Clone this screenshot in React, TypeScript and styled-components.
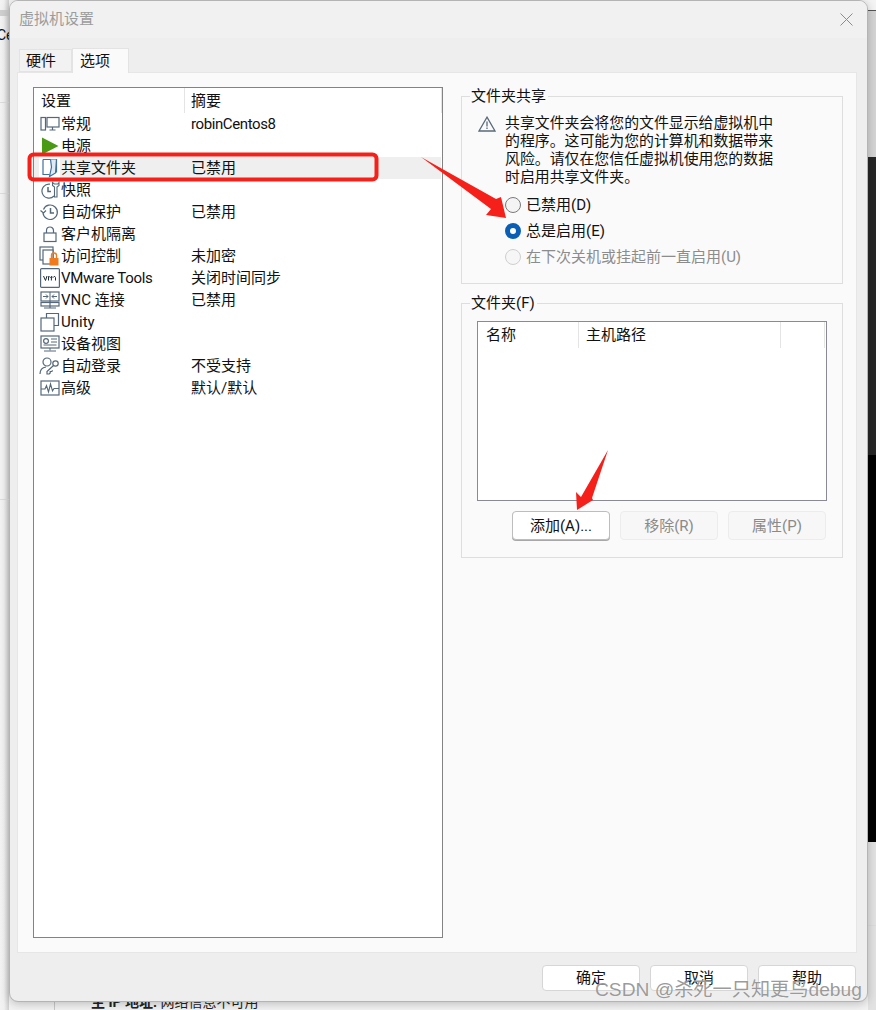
import React from "react";
import styled, { createGlobalStyle } from "styled-components";

const Global = createGlobalStyle`
  html, body { margin: 0; padding: 0; background: #f2f2f2; }
  * { box-sizing: border-box; }
  body { font-family: Roboto, "Noto Sans CJK SC", sans-serif; font-size: 15px; line-height: 20px; color: #111; }
`;

const Desktop = styled.div`
  position: relative;
  width: 876px;
  height: 1010px;
  overflow: hidden;
  background: #f3f3f3;
`;

const LeftStrip = styled.div`
  position: absolute;
  left: 0;
  top: 0;
  width: 9px;
  height: 1010px;
  display: flex;
  flex-direction: column;
  background: linear-gradient(90deg, #f3f3f3 0, #f0f0f0 4px, #cfcfcf 9px);
`;

const StripBand = styled.div<{ $h: number; $line?: boolean; $bg?: string }>`
  height: ${(p) => p.$h}px;
  flex: none;
  background: ${(p) => p.$bg ?? "transparent"};
  border-bottom: ${(p) => (p.$line ? "1px solid #dcdcdc" : "none")};
  overflow: hidden;
  white-space: nowrap;
  font-size: 14px;
  line-height: 18px;
`;

const StripText = styled.div<{ $top: number; $left: number }>`
  margin-top: ${(p) => p.$top}px;
  margin-left: ${(p) => p.$left}px;
`;

const RightStrip = styled.div`
  position: absolute;
  left: 868px;
  top: 0;
  width: 8px;
  height: 1010px;
  display: flex;
  flex-direction: column;
`;

const BottomPeek = styled.div`
  position: absolute;
  left: 54px;
  top: 993px;
  height: 17px;
  padding-left: 36px;
  border-left: 1px solid #c8c8c8;
  font-size: 14px;
  line-height: 18px;
  color: #222;
  white-space: nowrap;
`;

const Dialog = styled.div`
  position: absolute;
  left: 9px;
  top: 0;
  width: 859px;
  height: 1002px;
  display: flex;
  flex-direction: column;
  background: #eeeeee;
  border: 1px solid #b4b4b4;
  border-radius: 9px;
  box-shadow: 0 2px 10px rgba(0, 0, 0, 0.22);
`;

const TitleBar = styled.div`
  flex: none;
  height: 37px;
  display: flex;
  align-items: center;
  justify-content: space-between;
  padding: 0 14px 0 9px;
  color: #9c9c9c;
  font-size: 15px;
  border-radius: 8px 8px 0 0;
  background: #f1f1f1;
`;

const TitleText = styled.span`
  padding-bottom: 1px;
`;

const TabRow = styled.div`
  flex: none;
  height: 34px;
  display: flex;
  align-items: flex-end;
  padding-left: 9px;
`;

const Tab = styled.div<{ $active?: boolean }>`
  width: ${(p) => (p.$active ? 57 : 53)}px;
  height: ${(p) => (p.$active ? 25 : 23)}px;
  margin-bottom: ${(p) => (p.$active ? -1 : 0)}px;
  position: relative;
  z-index: ${(p) => (p.$active ? 1 : 0)};
  display: flex;
  align-items: center;
  justify-content: flex-start;
  padding: 0 0 ${(p) => (p.$active ? 1 : 0)}px ${(p) => (p.$active ? 7 : 6)}px;
  background: ${(p) => (p.$active ? "#fafafa" : "#f2f2f2")};
  border: 1px solid #e3e3e3;
  border-bottom: ${(p) => (p.$active ? "none" : "1px solid #e3e3e3")};
  font-size: 15px;
  color: #111;
`;

const Pane = styled.div`
  width: 840px;
  margin-left: 7px;
  height: 881px;
  flex: none;
  background: #fafafa;
  border: 1px solid #e6e6e6;
  padding: 14px 12px 14px 15px;
  display: flex;
  gap: 18px;
`;

const ListBox = styled.div`
  flex: none;
  width: 410px;
  height: 851px;
  background: #fff;
  border: 1px solid #838383;
`;

const HeaderRow = styled.div<{ $cols: string; $h: number }>`
  height: ${(p) => p.$h}px;
  display: grid;
  grid-template-columns: ${(p) => p.$cols};
  align-items: stretch;
`;

const HeaderCell = styled.div<{ $pad: number }>`
  display: flex;
  align-items: center;
  padding-left: ${(p) => p.$pad}px;
  border-right: 1px solid #e4e4e4;
  color: #111;
`;

const Row = styled.div<{ $selected?: boolean }>`
  height: 22px;
  display: grid;
  grid-template-columns: 151px 1fr;
  align-items: center;
  margin-right: 1px;
  background: ${(p) => (p.$selected ? "#efefef" : "transparent")};
  white-space: nowrap;
`;

const NameCell = styled.div`
  display: flex;
  align-items: center;
  gap: 1px;
  padding-left: 5px;
`;

const NameText = styled.span<{ $tight?: boolean }>`
  letter-spacing: ${(p) => (p.$tight ? "-0.3px" : "0")};
`;

const IconBox = styled.span<{ $selected?: boolean }>`
  flex: none;
  width: 21px;
  height: 22px;
  display: flex;
  align-items: center;
  justify-content: center;
  background: ${(p) => (p.$selected ? "#fff" : "transparent")};
`;

const SummaryCell = styled.div<{ $tight?: boolean }>`
  padding-left: 6px;
  letter-spacing: ${(p) => (p.$tight ? "-0.4px" : "0")};
`;

const RightColumn = styled.div`
  flex: none;
  width: 382px;
  padding-top: 9px;
  display: flex;
  flex-direction: column;
  gap: 19px;
`;

const GroupBox = styled.div<{ $h: number }>`
  height: ${(p) => p.$h}px;
  border: 1px solid #dedede;
  padding: 0 15px;
`;

const GroupLegend = styled.div`
  width: fit-content;
  margin: -11px 0 0 -7px;
  padding: 0 2px 0 1px;
  height: 20px;
  line-height: 20px;
  background: #fafafa;
  color: #111;
`;

const Notice = styled.div`
  display: flex;
  gap: 9px;
  margin-top: 8px;
  padding-left: 1px;
`;

const NoticeIcon = styled.span`
  flex: none;
  display: flex;
  height: 16px;
  margin-top: 2px;
`;

const NoticeText = styled.div`
  line-height: 18px;
  width: 272px;
  font-size: 14.9px;
  color: #111;
`;

const RadioList = styled.div`
  margin-top: 6px;
  padding-left: 35px;
  margin-left: -15px;
  display: flex;
  flex-direction: column;
`;

const RadioRow = styled.div<{ $disabled?: boolean }>`
  height: 26px;
  display: flex;
  align-items: center;
  gap: 5px;
  margin-left: 8px;
  color: ${(p) => (p.$disabled ? "#8c8c8c" : "#111")};
`;

const RadioDot = styled.span<{ $state: "off" | "on" | "disabled" }>`
  flex: none;
  width: 16px;
  height: 16px;
  border-radius: 50%;
  background: ${(p) => (p.$state === "on" ? "#fff" : p.$state === "off" ? "#f4f4f4" : "#f6f6f6")};
  border: ${(p) =>
    p.$state === "on" ? "5px solid #0a5fb4" : p.$state === "off" ? "1px solid #7a7a7a" : "1px solid #cfcfcf"};
`;

const TableBox = styled.div`
  width: 350px;
  height: 180px;
  margin-top: 8px;
  background: #fff;
  border: 1px solid #8a8a96;
`;

const TableButtons = styled.div`
  display: flex;
  justify-content: flex-end;
  gap: 10px;
  margin: 10px 0 0;
  width: 349px;
`;

const PushButton = styled.div<{ $disabled?: boolean; $h?: number }>`
  width: 98px;
  height: ${(p) => p.$h ?? 29}px;
  display: flex;
  align-items: center;
  justify-content: center;
  border-radius: 4px;
  background: ${(p) => (p.$disabled ? "#f7f7f7" : "#fff")};
  border: 1px solid ${(p) => (p.$disabled ? "#ececec" : "#bdbdbd")};
  box-shadow: ${(p) => (p.$disabled ? "none" : "0 1px 0 #a8a8a8")};
  color: ${(p) => (p.$disabled ? "#8a8a8a" : "#111")};
  font-size: 15px;
`;

const Footer = styled.div`
  flex: 1;
  display: flex;
  justify-content: flex-end;
  gap: 10px;
  padding: 12px 11px 0 0;
`;

const FooterButton = styled(PushButton)`
  border-color: #d6d6d6;
  box-shadow: none;
`;

const Overlay = styled.svg`
  position: absolute;
  left: 0;
  top: 0;
  pointer-events: none;
`;

const Watermark = styled.div`
  position: absolute;
  left: 595px;
  top: 978px;
  font-size: 19.2px;
  line-height: 24px;
  color: rgba(110, 110, 110, 0.7);
  white-space: nowrap;
  font-family: "Liberation Sans", "Noto Sans CJK SC", sans-serif;
  text-shadow: 0 0 1px #fff;
`;

const S = { fill: "none", stroke: "#54687a", strokeWidth: 1.2 };

const IconMonitor = () => (
  <svg width="20" height="18" viewBox="0 0 20 18">
    <rect x="1" y="2.5" width="4.5" height="12.5" {...S} />
    <rect x="7" y="2.5" width="12" height="9.5" {...S} />
    <path d="M12.5 12v2.5M9.5 15h6" {...S} />
  </svg>
);
const IconPower = () => (
  <svg width="18" height="18" viewBox="0 0 18 18">
    <path d="M1 0.5 17.5 9 1 17.5Z" fill="#4a9a16" />
  </svg>
);
const IconShare = () => (
  <svg width="18" height="20" viewBox="0 0 18 20">
    <path d="M2 1.5h13.5v13" {...S} stroke="#3f6f9f" />
    <path d="M2 1.5v15h6.5" {...S} stroke="#3f6f9f" />
    <path d="M9.5 1.5l1 7.5-2 9.5 6-3.5 1-13.5" fill="#dfeaf5" stroke="#3f6f9f" strokeWidth="1.2" />
  </svg>
);
const IconSnapshot = () => (
  <svg width="20" height="20" viewBox="0 0 20 20">
    <path d="M10 4.2A7 7 0 1 0 14 16" {...S} />
    <path d="M8 7v4.5h3" {...S} strokeWidth="1.5" />
    <path d="M12.5 2.5v3l2 1.5v10h2.5V7l2-1.5v-3l-1.2 1.5h-3.5z" fill="#fff" stroke="#54687a" strokeWidth="1.1" />
  </svg>
);
const IconProtect = () => (
  <svg width="20" height="20" viewBox="0 0 20 20">
    <path d="M3.5 7.5A7.2 7.2 0 1 1 3 11" {...S} />
    <path d="M0.5 8.5 3.5 11 6 8.5" {...S} />
    <path d="M10.5 6v5h3.5" {...S} strokeWidth="1.5" />
  </svg>
);
const IconLock = () => (
  <svg width="18" height="18" viewBox="0 0 18 18">
    <rect x="3" y="8" width="12" height="8.5" {...S} />
    <path d="M5.5 8V5.5a3.5 3.5 0 0 1 7 0V8" {...S} />
  </svg>
);
const IconAccess = () => (
  <svg width="21" height="21" viewBox="0 0 21 21">
    <rect x="1" y="1" width="13" height="13" {...S} />
    <rect x="4" y="4" width="10" height="14" fill="#fff" stroke="#54687a" strokeWidth="1.2" />
    <rect x="10.5" y="12" width="9" height="7.5" fill="#f07a1c" />
    <path d="M12.5 12V9.5a2.5 2.5 0 0 1 5 0V12" fill="none" stroke="#f07a1c" strokeWidth="1.4" />
  </svg>
);
const IconVm = () => (
  <svg width="20" height="20" viewBox="0 0 20 20">
    <rect x="0.6" y="0.6" width="18.8" height="18.8" rx="1" fill="#fff" stroke="#54687a" strokeWidth="1.2" />
    <path d="M3.5 8 5.5 12.5 7 8M8.5 12.5V8.5h.8l1 1 1-1h.7l1 1 1-1h.8l.7 1v3M11.4 9v3.5" fill="none" stroke="#1d2c3a" strokeWidth="1" />
  </svg>
);
const IconVnc = () => (
  <svg width="20" height="20" viewBox="0 0 20 20">
    <rect x="1" y="2" width="18" height="9" {...S} />
    <path d="M3 6.5h5M6 4.5l2 2-2 2M17 6.5h-5M14 4.5l-2 2 2 2M10 2v9" {...S} strokeWidth="1" />
    <rect x="1" y="12.5" width="18" height="3.5" {...S} />
    <path d="M10 11v7M4 18h12" {...S} />
  </svg>
);
const IconUnity = () => (
  <svg width="20" height="20" viewBox="0 0 20 20">
    <path d="M6.5 6V1.5h12v12H14" {...S} />
    <rect x="1" y="6" width="13" height="13" {...S} />
  </svg>
);
const IconDevice = () => (
  <svg width="20" height="18" viewBox="0 0 20 18">
    <rect x="1" y="1" width="18" height="12" {...S} />
    <circle cx="6" cy="6" r="2.4" {...S} />
    <path d="M11 4h6M11 7h6M3.5 10h13M10 13v2.5M4 16h12" {...S} strokeWidth="1" />
  </svg>
);
const IconLogin = () => (
  <svg width="21" height="20" viewBox="0 0 21 20">
    <circle cx="8" cy="6" r="4" {...S} />
    <path d="M1 18c0-4 2.5-6.5 6-7" {...S} />
    <circle cx="16.5" cy="7.5" r="2.7" {...S} />
    <path d="M14.5 9.5 8 15.5v2.5h2.2l1-1v-1.5h1.5l1-1" {...S} />
  </svg>
);
const IconAdvanced = () => (
  <svg width="20" height="18" viewBox="0 0 20 18">
    <rect x="1" y="2" width="18" height="14" {...S} />
    <path d="M1 10h4l1.5-3.5L8.5 13l2-8 2 7 1.5-2.5h5" {...S} strokeWidth="1.1" />
  </svg>
);
const IconWarning = () => (
  <svg width="18" height="16" viewBox="0 0 18 16">
    <path d="M9 1.2 17 15H1Z" fill="none" stroke="#5a6a78" strokeWidth="1.3" />
    <path d="M9 5.5v5M9 11.5v1.5" stroke="#5a6a78" strokeWidth="1.3" />
  </svg>
);
const IconClose = () => (
  <svg width="13" height="13" viewBox="0 0 13 13">
    <path d="M.5.5l12 12M12.5.5l-12 12" stroke="#8c8c8c" strokeWidth="1" fill="none" />
  </svg>
);

type Item = { icon: React.ReactNode; name: string; summary?: string; selected?: boolean };

const items: Item[] = [
  { icon: <IconMonitor />, name: "常规", summary: "robinCentos8" },
  { icon: <IconPower />, name: "电源" },
  { icon: <IconShare />, name: "共享文件夹", summary: "已禁用", selected: true },
  { icon: <IconSnapshot />, name: "快照" },
  { icon: <IconProtect />, name: "自动保护", summary: "已禁用" },
  { icon: <IconLock />, name: "客户机隔离" },
  { icon: <IconAccess />, name: "访问控制", summary: "未加密" },
  { icon: <IconVm />, name: "VMware Tools", summary: "关闭时间同步" },
  { icon: <IconVnc />, name: "VNC 连接", summary: "已禁用" },
  { icon: <IconUnity />, name: "Unity" },
  { icon: <IconDevice />, name: "设备视图" },
  { icon: <IconLogin />, name: "自动登录", summary: "不受支持" },
  { icon: <IconAdvanced />, name: "高级", summary: "默认/默认" },
];

export default function App() {
  return (
    <Desktop>
      <Global />
      <LeftStrip>
        <StripBand $h={10} />
        <StripBand $h={6} $bg="#cfcfcf" />
        <StripBand $h={87} $line>
          <StripText $top={10} $left={-3}>Ce</StripText>
        </StripBand>
        <StripBand $h={91} $line />
        <StripBand $h={106}>
          <StripText $top={109} $left={-7}>件</StripText>
        </StripBand>
        <StripBand $h={200} $line />
      </LeftStrip>
      <RightStrip>
        <StripBand $h={10} $bg="#f4f4f4" />
        <StripBand $h={1} $bg="#555" />
        <StripBand $h={146} $bg="#d4d4d4" />
        <StripBand $h={298} $bg="#262626" />
        <StripBand $h={387} $bg="#000" />
        <StripBand $h={84} $bg="#e2e2e2" $line />
        <StripBand $h={84} $bg="#e2e2e2" />
      </RightStrip>
      <BottomPeek>
        <b>主 IP 地址:</b> 网络信息不可用
      </BottomPeek>
      <Dialog>
        <TitleBar>
          <TitleText>虚拟机设置</TitleText>
          <IconClose />
        </TitleBar>
        <TabRow>
          <Tab>硬件</Tab>
          <Tab $active>选项</Tab>
        </TabRow>
        <Pane>
          <ListBox>
            <HeaderRow $cols="151px 1fr" $h={25}>
              <HeaderCell $pad={7}>设置</HeaderCell>
              <HeaderCell $pad={6}>摘要</HeaderCell>
            </HeaderRow>
            {items.map((it) => (
              <Row key={it.name} $selected={it.selected}>
                <NameCell>
                  <IconBox $selected={it.selected}>{it.icon}</IconBox>
                  <NameText $tight={it.name === "VMware Tools"}>{it.name}</NameText>
                </NameCell>
                <SummaryCell $tight={it.summary === "robinCentos8"}>{it.summary}</SummaryCell>
              </Row>
            ))}
          </ListBox>
          <RightColumn>
            <GroupBox $h={188}>
              <GroupLegend>文件夹共享</GroupLegend>
              <Notice>
                <NoticeIcon>
                  <IconWarning />
                </NoticeIcon>
                <NoticeText>
                  共享文件夹会将您的文件显示给虚拟机中
                  <br />
                  的程序。这可能为您的计算机和数据带来
                  <br />
                  风险。请仅在您信任虚拟机使用您的数据
                  <br />
                  时启用共享文件夹。
                </NoticeText>
              </Notice>
              <RadioList>
                <RadioRow>
                  <RadioDot $state="off" />
                  已禁用(D)
                </RadioRow>
                <RadioRow>
                  <RadioDot $state="on" />
                  总是启用(E)
                </RadioRow>
                <RadioRow $disabled>
                  <RadioDot $state="disabled" />
                  在下次关机或挂起前一直启用(U)
                </RadioRow>
              </RadioList>
            </GroupBox>
            <GroupBox $h={255}>
              <GroupLegend>文件夹(F)</GroupLegend>
              <TableBox>
                <HeaderRow $cols="101px 202px 44px" $h={26}>
                  <HeaderCell $pad={8}>名称</HeaderCell>
                  <HeaderCell $pad={7}>主机路径</HeaderCell>
                  <HeaderCell $pad={0} />
                </HeaderRow>
              </TableBox>
              <TableButtons>
                <PushButton>添加(A)...</PushButton>
                <PushButton $disabled>移除(R)</PushButton>
                <PushButton $disabled>属性(P)</PushButton>
              </TableButtons>
            </GroupBox>
          </RightColumn>
        </Pane>
        <Footer>
          <FooterButton $h={26}>确定</FooterButton>
          <FooterButton $h={26}>取消</FooterButton>
          <FooterButton $h={26}>帮助</FooterButton>
        </Footer>
      </Dialog>
      <Overlay width="876" height="1010" viewBox="0 0 876 1010">
        <rect x="29.5" y="154.5" width="347" height="25" rx="4" fill="none" stroke="#f5201a" strokeWidth="4" />
        <path d="M421 157 496 199 501 197 506 218 486 215 491 209Z" fill="#f5201a" />
        <path d="M608 450 592 498 593 500 577 510 576 492 581 497Z" fill="#f5201a" />
      </Overlay>
      <Watermark>CSDN @杀死一只知更鸟debug</Watermark>
    </Desktop>
  );
}
